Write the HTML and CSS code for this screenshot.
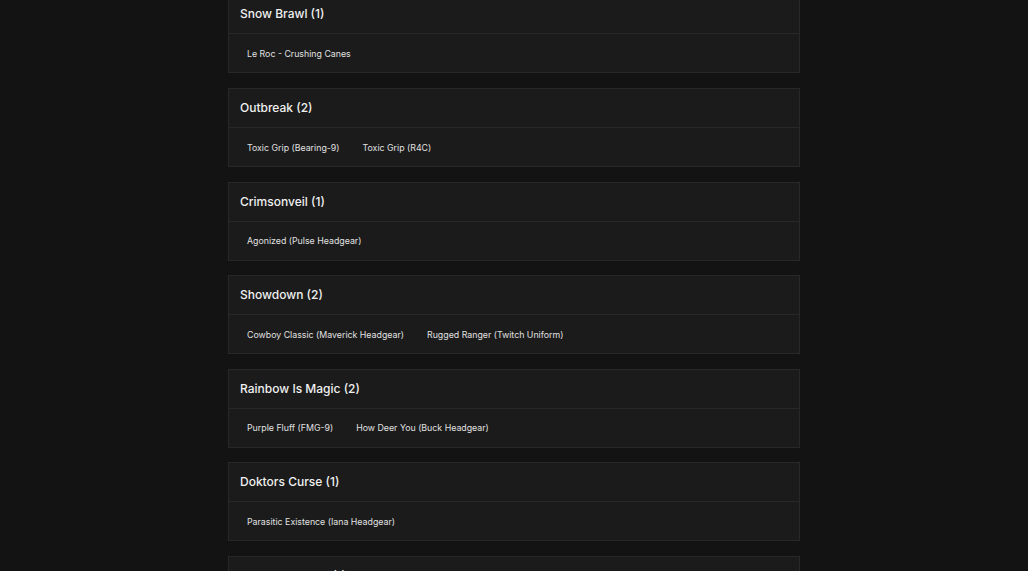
FILE: index.html
```html
<!DOCTYPE html>
<html lang="en">
<head>
<meta charset="utf-8">
<title>Collections</title>
<link rel="stylesheet" href="styles.css">
</head>
<body>
<main class="list">
  <section class="card">
    <h2 class="card-title">Snow Brawl (1)</h2>
    <div class="card-body"><span class="item">Le Roc - Crushing Canes</span></div>
  </section>
  <section class="card">
    <h2 class="card-title">Outbreak (2)</h2>
    <div class="card-body"><span class="item">Toxic Grip (Bearing-9)</span><span class="item">Toxic Grip (R4C)</span></div>
  </section>
  <section class="card">
    <h2 class="card-title">Crimsonveil (1)</h2>
    <div class="card-body"><span class="item">Agonized (Pulse Headgear)</span></div>
  </section>
  <section class="card">
    <h2 class="card-title">Showdown (2)</h2>
    <div class="card-body"><span class="item">Cowboy Classic (Maverick Headgear)</span><span class="item">Rugged Ranger (Twitch Uniform)</span></div>
  </section>
  <section class="card">
    <h2 class="card-title">Rainbow Is Magic (2)</h2>
    <div class="card-body"><span class="item">Purple Fluff (FMG-9)</span><span class="item">How Deer You (Buck Headgear)</span></div>
  </section>
  <section class="card">
    <h2 class="card-title">Doktors Curse (1)</h2>
    <div class="card-body"><span class="item">Parasitic Existence (Iana Headgear)</span></div>
  </section>
  <section class="card">
    <h2 class="card-title">Hallowed Cloak (1)</h2>
    <div class="card-body"><span class="item">Spectral Veil</span></div>
  </section>
</main>
</body>
</html>
```
FILE: styles.css
```css
html, body {
  margin: 0;
  padding: 0;
  background: #131313;
  overflow: hidden;
}
body {
  font-family: Inter, "Noto Sans", sans-serif;
  color: #e8e8e8;
}
.list {
  width: 572px;
  margin: -5.6px auto 0;
  display: flex;
  flex-direction: column;
  gap: 14.6px;
}
.card {
  background: #1b1b1b;
  border: 1px solid #282828;
  box-sizing: border-box;
}
.card-title {
  margin: 0;
  height: 39px;
  box-sizing: border-box;
  padding: 0 11px 1px;
  display: flex;
  align-items: center;
  font-size: 12px;
  font-weight: 500;
  color: #f0f0f0;
  border-bottom: 1px solid #282828;
}
.card-body {
  height: 38px;
  box-sizing: border-box;
  padding: 0 18px;
  display: flex;
  align-items: center;
  gap: 23px;
}
.item {
  font-size: 8.8px;
  color: #e0e0e0;
}
```
